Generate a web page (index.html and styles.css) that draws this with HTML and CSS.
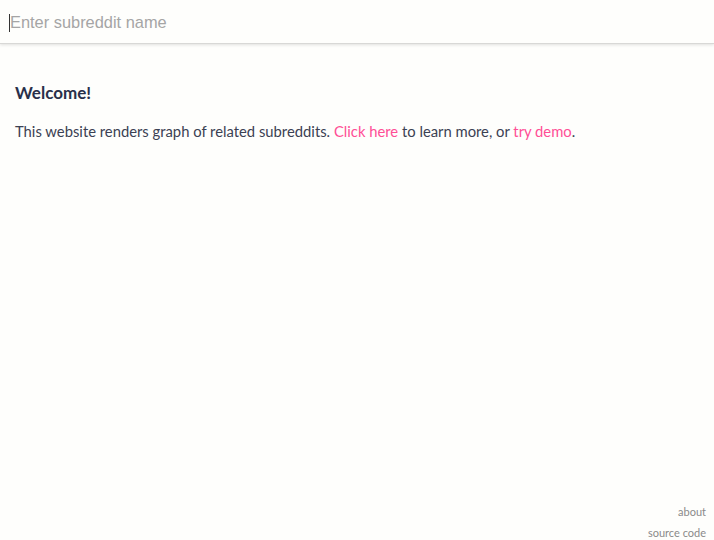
FILE: index.html
```html
<!DOCTYPE html>
<html>
<head>
<meta charset="utf-8">
<link rel="stylesheet" href="styles.css">
</head>
<body>
<div class="search-bar">
  <span class="caret"></span>
  <input class="search-input" type="text" placeholder="Enter subreddit name">
</div>
<main class="welcome">
  <h2 class="title">Welcome!</h2>
  <p class="intro">This website renders graph of related subreddits. <a href="#" class="link">Click here</a> to learn more, or <a href="#" class="link">try demo</a>.</p>
</main>
<footer class="footer">
  <a href="#" class="foot-link">about</a>
  <a href="#" class="foot-link">source code</a>
</footer>
</body>
</html>
```
FILE: styles.css
```css
html, body {
  margin: 0;
  padding: 0;
  height: 100%;
}
body {
  background: #fefefc;
  font-family: Lato, "Noto Sans", sans-serif;
  color: #2f3547;
  display: flex;
  flex-direction: column;
}
.search-bar {
  height: 43px;
  border-bottom: 1px solid #d8d8d6;
  box-shadow: 0 1px 3px rgba(0,0,0,0.12);
  display: flex;
  align-items: center;
  padding-left: 9px;
}
.caret {
  width: 1px;
  height: 18px;
  margin-top: 2px;
  background: #333;
  flex: none;
}
.search-input {
  border: none;
  outline: none;
  background: transparent;
  font-family: "Liberation Sans", Arial, sans-serif;
  font-size: 16.4px;
  padding: 2px 0 0 0;
  margin: 0;
  width: 100%;
  color: #333;
}
.search-input::placeholder {
  color: #a5a5a5;
}
.welcome {
  padding: 0 15px;
  flex: 1;
}
.title {
  margin: 39px 0 0;
  font-size: 17px;
  font-weight: 700;
  color: #29304a;
  line-height: 20px;
}
.intro {
  margin: 18px 0 0;
  font-size: 14.8px;
  line-height: 20px;
  color: #3b4153;
}
.link {
  color: #ff4f96;
  text-decoration: none;
}
.footer {
  display: flex;
  flex-direction: column;
  align-items: flex-end;
  padding: 0 8px 0 0;
  gap: 6px;
}
.foot-link {
  font-size: 11px;
  color: #8a8a8a;
  text-decoration: none;
  line-height: 15px;
}
```
